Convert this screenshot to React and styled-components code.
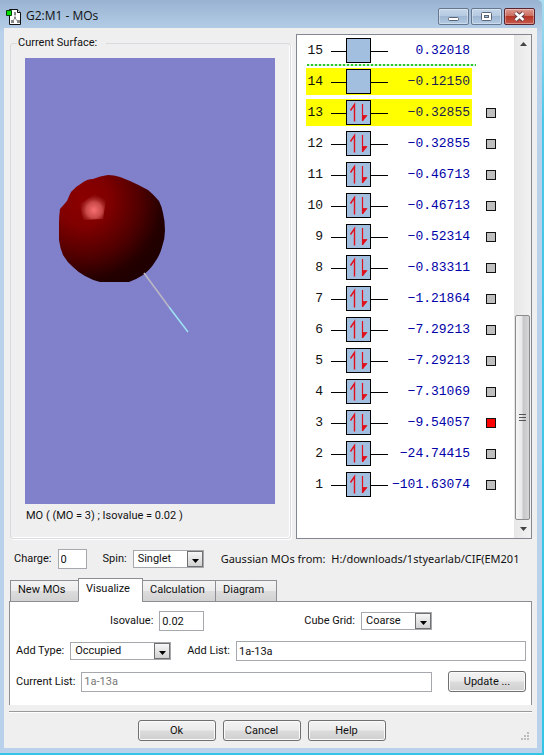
import React, { useState } from 'react';
import styled, { createGlobalStyle } from 'styled-components';

const GlobalStyle = createGlobalStyle`
  * {
    box-sizing: border-box;
  }

  body {
    margin: 0;
    background: linear-gradient(#a9dcef, #4cc6e8 120px, #33c4e6);
  }

  body, input, select, button {
    font-family: Roboto, 'Liberation Sans', sans-serif;
    font-size: 11px;
    line-height: 14px;
    color: #111;
  }
`;

const Window = styled.div`
  display: flex;
  flex-direction: column;
  min-height: calc(100vh - 2px);
  margin: 0 2px 2px 0;
  padding: 0 5px 5px 4px;
  border-radius: 0 5px 0 0;
  background: linear-gradient(#98b3d1, #b9d1ea 34px, #b9d1ea);
`;

const TitleBar = styled.header`
  display: flex;
  align-items: center;
  height: 28px;
  padding: 4px 2px 0;

  h1 {
    flex: 1;
    margin: 0 0 0 4px;
    font: 12px/16px 'Open Sans', sans-serif;
    color: #111;
  }
`;

const WindowButtons = styled.div`
  display: flex;
  gap: 2px;
`;

const WindowButton = styled.button`
  width: 31px;
  height: 17px;
  padding: 0;
  border: 1px solid ${props => (props.$close ? '#5a2530' : '#66788f')};
  border-radius: 2px;
  background: ${props =>
    props.$close
      ? 'linear-gradient(#dd9b90, #cb6d60 45%, #b53527 50%, #c65a4c)'
      : 'linear-gradient(#c5d6e9, #b5cae1 45%, #9fb7d2 50%, #b2cae4)'};
  box-shadow: inset 0 0 0 1px rgba(255, 255, 255, 0.35);

  svg {
    display: block;
    margin: 0 auto;
  }
`;

const Body = styled.main`
  display: flex;
  flex: 1;
  flex-direction: column;
  padding: 6px 5px 7px;
  background: #efefef;
`;

const Panels = styled.div`
  display: flex;
  flex: 1;
  gap: 5px;
`;

const GroupBox = styled.fieldset`
  display: flex;
  flex: 1;
  flex-direction: column;
  min-width: 0;
  margin: 2px 0 0 1px;
  padding: 8px 15px 15px 14px;
  border: 1px solid #d8dadd;
  border-radius: 3px;
  box-shadow: inset -1px -1px #fff, 1px 1px #fff;

  legend {
    margin-left: -8px;
    padding: 0 9px 0 1px;
  }
`;

const Viewport = styled.div`
  flex: 1;
  overflow: hidden;
  background: #8080cb;

  svg {
    display: block;
  }
`;

const Caption = styled.p`
  margin: 5px 0 0 1px;
`;

const OrbitalPanel = styled.section`
  display: flex;
  width: 236px;
  border: 1px solid #828790;
  background: #fff;
`;

const OrbitalList = styled.div`
  flex: 1;
  overflow: hidden;
`;

const OrbitalTable = styled.table`
  margin: -2px 0 0 9px;
  border-spacing: 0 4px;
  font: 13px/15px 'Liberation Mono', monospace;

  td {
    height: 27px;
    padding: 0;
  }
`;

const Level = styled.td`
  position: relative;
  width: 22px;
  text-align: right;
  background: ${props => (props.$highlight ? '#ffff00' : 'none')};

  && {
    padding-right: 5px;
  }
`;

const Occupancy = styled.td`
  width: 63px;
  background: ${props => (props.$highlight ? '#ffff00' : 'none')};

  svg {
    display: block;
    margin-left: 3px;
  }
`;

const Energy = styled.td`
  width: 81px;
  text-align: right;
  white-space: nowrap;
  color: ${props => (props.$highlight ? '#1c1c50' : '#0000a8')};
  background: ${props => (props.$highlight ? '#ffff00' : 'none')};

  && {
    padding-right: 2px;
  }
`;

const Marker = styled.td`
  width: 33px;

  && {
    padding-left: 14px;
  }
`;

const MarkerBox = styled.input`
  display: block;
  appearance: none;
  width: 10px;
  height: 10px;
  margin: 1px 0 0;
  border: 1px solid #111;
  background: #bfbfbf;

  &:checked {
    background: #f00;
  }
`;

const Divider = styled.span`
  position: absolute;
  left: 1px;
  bottom: -2px;
  width: 169px;
  height: 2px;
  background: repeating-linear-gradient(90deg, #2ec62e 0 2px, #c8f5c8 2px 4px);
`;

const ScrollBar = styled.div`
  display: flex;
  flex-direction: column;
  align-items: center;
  width: 17px;
  border-left: 1px solid #e6e6e6;
  background: linear-gradient(90deg, #e8e8e8, #f2f2f2);
`;

const ScrollButton = styled.button`
  height: 18px;
  width: 100%;
  padding: 0;
  border: 0;
  background: none;

  svg {
    display: block;
    margin: 0 auto;
  }
`;

const Track = styled.div`
  display: flex;
  flex: 1;
  flex-direction: column;
  justify-content: flex-end;
  width: 100%;
`;

const Thumb = styled.div`
  display: flex;
  align-items: center;
  justify-content: center;
  width: 15px;
  height: 44%;
  border: 1px solid #8b8b8b;
  border-radius: 2px;
  background: linear-gradient(90deg, #f5f5f5, #e9e9eb 45%, #c7c7ca 55%, #d6d6d8);
`;

const Field = styled.div`
  display: flex;
  align-items: center;
  gap: 6px;
  flex: ${props => (props.$grow ? 1 : 'none')};
  white-space: nowrap;
`;

const TextInput = styled.input`
  flex: ${props => (props.$width ? 'none' : 1)};
  width: ${props => props.$width || 'auto'};
  min-width: 0;
  height: 20px;
  padding: 1px 2px;
  border: 1px solid #a5a8ad;
  border-radius: 0;
  background: #fff;
  outline: none;

  &:disabled {
    color: #777;
  }
`;

const SelectBox = styled.div`
  position: relative;
  width: ${props => props.$width};

  select {
    display: block;
    appearance: none;
    width: 100%;
    height: 18px;
    padding: 0 18px 1px 4px;
    border: 1px solid #a5a8ad;
    border-radius: 0;
    background: #fff;
    outline: none;
  }

  svg {
    position: absolute;
    top: 1px;
    right: 0;
    pointer-events: none;
  }
`;

const ChargeRow = styled.div`
  display: flex;
  align-items: center;
  gap: 16px;
  margin: 10px 0 9px 5px;
  overflow: hidden;
`;

const Source = styled.p`
  flex: 1;
  min-width: 0;
  margin: 0 5px 0 1px;
  overflow: hidden;
  white-space: pre;
  font: 11px/16px 'Noto Sans', sans-serif;
`;

const Tabs = styled.div`
  display: flex;
  align-items: flex-end;
  position: relative;
  padding-left: 1px;
  margin-bottom: -1px;
`;

const Tab = styled.button`
  width: ${props => props.$width};
  height: ${props => (props.$active ? '24px' : '22px')};
  padding: 0 0 2px 7px;
  border: 1px solid #8c8e94;
  border-bottom-color: ${props => (props.$active ? '#fff' : '#8c8e94')};
  margin-right: -1px;
  text-align: left;
  background: ${props =>
    props.$active ? '#fff' : 'linear-gradient(#f4f4f4, #ebebeb 48%, #dcdcdc 52%, #d2d2d2)'};
`;

const TabPanel = styled.section`
  display: flex;
  flex-direction: column;
  gap: 10px;
  padding: 9px 5px 13px 6px;
  border: 1px solid #8c8e94;
  border-bottom: 0;
  background: #fff;
`;

const FormRow = styled.div`
  display: flex;
  align-items: center;
  justify-content: ${props => (props.$spread ? 'space-between' : 'flex-start')};
  gap: 16px;
  padding: ${props => (props.$spread ? '0 94px' : '0')};
`;

const PushButton = styled.button`
  width: 78px;
  height: 21px;
  padding: 0;
  border: 1px solid #707070;
  border-radius: 3px;
  background: linear-gradient(#f3f3f3, #ebebeb 48%, #dcdcdc 52%, #cfcfcf);
  box-shadow: inset 0 0 0 1px #fafafa;
`;

const Footer = styled.footer`
  display: flex;
  justify-content: center;
  gap: 7px;
  position: relative;
  margin-top: 6px;
  padding: 8px 18px 0 0;
  border-top: 1px solid #9a9a9a;
  box-shadow: inset 0 1px #fff;

  > svg {
    position: absolute;
    right: 2px;
    bottom: 0;
  }
`;

const ORBITALS = [
  { level: 15, energy: '0.32018' },
  { level: 14, energy: '−0.12150', highlight: true },
  { level: 13, energy: '−0.32855', filled: true, highlight: true },
  { level: 12, energy: '−0.32855', filled: true },
  { level: 11, energy: '−0.46713', filled: true },
  { level: 10, energy: '−0.46713', filled: true },
  { level: 9, energy: '−0.52314', filled: true },
  { level: 8, energy: '−0.83311', filled: true },
  { level: 7, energy: '−1.21864', filled: true },
  { level: 6, energy: '−7.29213', filled: true },
  { level: 5, energy: '−7.29213', filled: true },
  { level: 4, energy: '−7.31069', filled: true },
  { level: 3, energy: '−9.54057', filled: true },
  { level: 2, energy: '−24.74415', filled: true },
  { level: 1, energy: '−101.63074', filled: true }
];

const TABS = [
  { name: 'New MOs', width: '69px' },
  { name: 'Visualize', width: '65px' },
  { name: 'Calculation', width: '74px' },
  { name: 'Diagram', width: '62px' }
];

const AppIcon = () => (
  <svg width="16" height="17" viewBox="0 0 16 17">
    <path d="M3.5 1.5h8l3 3v12h-11z" fill="#fff" stroke="#111" />
    <path d="M11.5 1.5v3h3" fill="#ddd" stroke="#111" />
    <path d="M9 5v5M9 10l-3 4M9 10l3 4" stroke="#999" fill="none" />
    <path d="M8 4h2v3H8zM5 12h3v3H5zM11 12h3v3h-3zM8 9h2v2H8z" fill="#888" />
    <path d="M.5 2.5h5v5h-5z" fill="#00e000" stroke="#064006" />
  </svg>
);

const OrbitalIcon = ({ filled }) => (
  <svg width="57" height="27" viewBox="0 0 57 27">
    <path d="M0 14.5h57" stroke="#000" />
    <rect x="15.5" y="1.5" width="24" height="24" fill="#a3bfdf" stroke="#000" />
    {filled && (
      <g stroke="#e0101c" fill="#e0101c">
        <path d="M23.5 22.5v-17l-4 6" fill="none" strokeWidth="1.4" />
        <path d="M31.5 5v17" strokeWidth="1.2" />
        <path d="M32 21.5v-5h4z" strokeWidth="0.8" />
      </g>
    )}
  </svg>
);

const DropArrow = () => (
  <svg width="17" height="17" viewBox="0 0 17 17">
    <defs>
      <linearGradient id="drop" x2="0" y2="1">
        <stop stopColor="#f8f8f8" />
        <stop offset="1" stopColor="#d0d0d0" />
      </linearGradient>
    </defs>
    <rect x=".5" y=".5" width="15" height="15" fill="url(#drop)" stroke="#707070" />
    <path d="M5 8h7l-3.5 4z" fill="#000" />
  </svg>
);

const Surface = () => (
  <svg width="250" height="280" viewBox="0 0 250 280">
    <defs>
      <radialGradient id="ball" gradientUnits="userSpaceOnUse" cx="58" cy="142" r="88">
        <stop stopColor="#8c0000" />
        <stop offset=".3" stopColor="#800000" />
        <stop offset=".65" stopColor="#500000" />
        <stop offset=".9" stopColor="#250000" />
        <stop offset="1" stopColor="#200000" />
      </radialGradient>
      <radialGradient id="shine" gradientUnits="userSpaceOnUse" cx="69" cy="152" r="16">
        <stop stopColor="#f87070" />
        <stop offset=".5" stopColor="#c84848" />
        <stop offset="1" stopColor="#8c1010" stopOpacity=".1" />
      </radialGradient>
    </defs>
    <path
      d="M83 117Q75 118 68 121Q62 121 57 125Q50 129 46 134Q44 138 42 143L35 151Q34 158 34 165V182Q35 190 38 197Q42 204 48 209Q54 215 60 218Q67 222 75 224H104Q112 221 118 217Q125 212 130 204Q135 197 137 189Q140 181 140 172Q140 163 138 155Q137 149 134 143Q129 137 123 132Q114 127 105 123L95 119Q89 117 83 117Z"
      fill="url(#ball)"
    />
    <path d="M70 136L81 142L78 161L58 162L55 146Z" fill="url(#shine)" />
    <path d="M119 215L144 249" stroke="#bcb8c4" strokeWidth="1.5" />
    <path d="M144 249L163 274" stroke="#9fe3f4" strokeWidth="1.5" />
  </svg>
);

const Select = ({ id, width, options }) => (
  <SelectBox $width={width}>
    <select id={id} defaultValue={options[0]}>
      {options.map(option => (
        <option key={option}>{option}</option>
      ))}
    </select>
    <DropArrow />
  </SelectBox>
);

const App = () => {
  const [tab, setTab] = useState('Visualize');
  const [marked, setMarked] = useState([3]);

  const toggle = level =>
    setMarked(marked.includes(level) ? marked.filter(l => l !== level) : [...marked, level]);

  return (
    <>
      <GlobalStyle />
      <Window>
        <TitleBar>
          <AppIcon />
          <h1>G2:M1 - MOs</h1>
          <WindowButtons>
            <WindowButton type="button" aria-label="Minimize">
              <svg width="29" height="15">
                <rect x="9.5" y="8.5" width="10" height="3" rx="1" fill="#fff" stroke="#596577" />
              </svg>
            </WindowButton>
            <WindowButton type="button" aria-label="Maximize">
              <svg width="29" height="15">
                <rect x="9.5" y="3.5" width="10" height="8" rx="1" fill="#fff" stroke="#596577" />
                <rect x="12.5" y="6.5" width="4" height="2" fill="#a8bdd6" stroke="#596577" />
              </svg>
            </WindowButton>
            <WindowButton type="button" aria-label="Close" $close>
              <svg width="29" height="15">
                <path d="M10.5 4l8 7M18.5 4l-8 7" stroke="#5c4048" strokeWidth="4.5" />
                <path d="M10.5 4l8 7M18.5 4l-8 7" stroke="#fff" strokeWidth="2.5" />
              </svg>
            </WindowButton>
          </WindowButtons>
        </TitleBar>

        <Body>
          <Panels>
            <GroupBox>
              <legend>Current Surface:</legend>
              <Viewport>
                <Surface />
              </Viewport>
              <Caption>MO ( (MO = 3) ; Isovalue = 0.02 )</Caption>
            </GroupBox>

            <OrbitalPanel>
              <OrbitalList>
                <OrbitalTable>
                  <tbody>
                    {ORBITALS.map(({ level, energy, filled, highlight }) => (
                      <tr key={level}>
                        <Level $highlight={highlight}>
                          {level}
                          {level === 15 && <Divider />}
                        </Level>
                        <Occupancy $highlight={highlight}>
                          <OrbitalIcon filled={filled} />
                        </Occupancy>
                        <Energy $highlight={highlight}>{energy}</Energy>
                        <Marker>
                          {filled && (
                            <MarkerBox
                              type="checkbox"
                              aria-label={`Orbital ${level}`}
                              checked={marked.includes(level)}
                              onChange={() => toggle(level)}
                            />
                          )}
                        </Marker>
                      </tr>
                    ))}
                  </tbody>
                </OrbitalTable>
              </OrbitalList>
              <ScrollBar>
                <ScrollButton type="button" aria-label="Scroll up">
                  <svg width="7" height="4">
                    <path d="M0 4L3.5 0L7 4z" fill="#444" />
                  </svg>
                </ScrollButton>
                <Track>
                  <Thumb>
                    <svg width="7" height="9">
                      <path d="M0 1.5h7M0 4.5h7M0 7.5h7" stroke="#555" />
                    </svg>
                  </Thumb>
                </Track>
                <ScrollButton type="button" aria-label="Scroll down">
                  <svg width="7" height="4">
                    <path d="M0 0L3.5 4L7 0z" fill="#444" />
                  </svg>
                </ScrollButton>
              </ScrollBar>
            </OrbitalPanel>
          </Panels>

          <ChargeRow>
            <Field>
              <label htmlFor="charge">Charge:</label>
              <TextInput id="charge" $width="29px" defaultValue="0" />
            </Field>
            <Field>
              <label htmlFor="spin">Spin:</label>
              <Select id="spin" width="71px" options={['Singlet', 'Triplet']} />
            </Field>
            <Source>{'Gaussian MOs from:  H:/downloads/1styearlab/CIF(EM201'}</Source>
          </ChargeRow>

          <Tabs role="tablist">
            {TABS.map(({ name, width }) => (
              <Tab
                key={name}
                type="button"
                role="tab"
                aria-selected={tab === name}
                $active={tab === name}
                $width={width}
                onClick={() => setTab(name)}
              >
                {name}
              </Tab>
            ))}
          </Tabs>

          <TabPanel role="tabpanel">
            <FormRow $spread>
              <Field>
                <label htmlFor="isovalue">Isovalue:</label>
                <TextInput id="isovalue" $width="45px" defaultValue="0.02" />
              </Field>
              <Field>
                <label htmlFor="grid">Cube Grid:</label>
                <Select id="grid" width="71px" options={['Coarse', 'Medium', 'Fine']} />
              </Field>
            </FormRow>
            <FormRow>
              <Field>
                <label htmlFor="addType">Add Type:</label>
                <Select id="addType" width="101px" options={['Occupied', 'Virtual', 'All']} />
              </Field>
              <Field $grow>
                <label htmlFor="addList">Add List:</label>
                <TextInput id="addList" defaultValue="1a-13a" />
              </Field>
            </FormRow>
            <FormRow>
              <Field $grow>
                <label htmlFor="currentList">Current List:</label>
                <TextInput id="currentList" defaultValue="1a-13a" disabled />
              </Field>
              <PushButton type="button">Update ...</PushButton>
            </FormRow>
          </TabPanel>

          <Footer>
            <PushButton type="button">Ok</PushButton>
            <PushButton type="button">Cancel</PushButton>
            <PushButton type="button">Help</PushButton>
            <svg width="10" height="10" viewBox="0 0 10 10">
              <path d="M7 1h2v2H7zM7 4h2v2H7zM4 4h2v2H4zM7 7h2v2H7zM4 7h2v2H4zM1 7h2v2H1z" fill="#bdbdbd" />
            </svg>
          </Footer>
        </Body>
      </Window>
    </>
  );
};

export default App;
